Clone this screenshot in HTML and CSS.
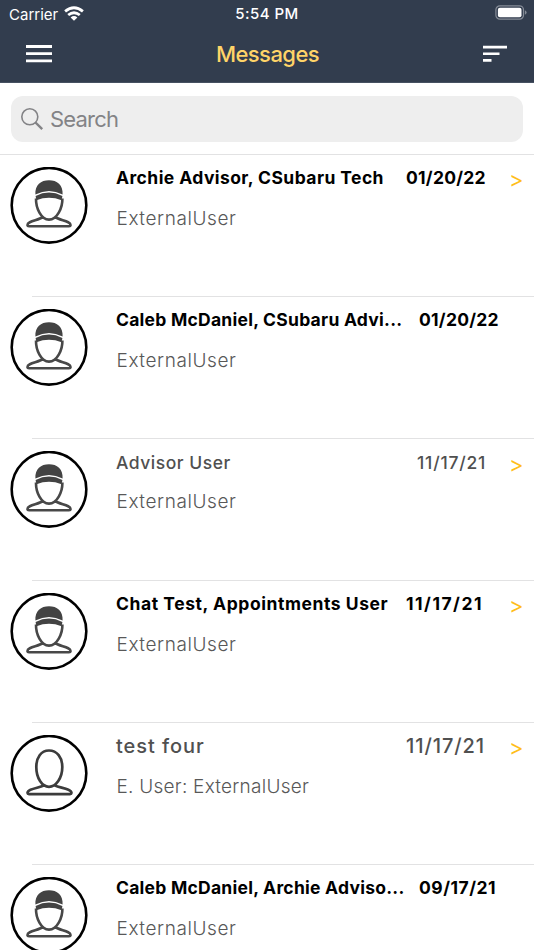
FILE: index.html
```html
<!DOCTYPE html>
<html lang="en">
<head>
<meta charset="utf-8">
<title>Messages</title>
<link rel="stylesheet" href="styles.css">
</head>
<body>
<svg class="defs" aria-hidden="true">
  <symbol id="cap-user" viewBox="0 0 78 78">
    <circle cx="39" cy="38.3" r="37.3" fill="#fff" stroke="#000" stroke-width="2.6"/>
    <path d="M26 31.5C25.8 41 31 52.6 39 52.6S52.6 41 52.4 31.5M32.5 50C29 53.6 17.5 53.4 17.4 58.2Q17.5 59.2 19 59.2H59Q60.5 59.2 60.6 58.2C60.5 53.4 49 53.6 45.5 50" fill="none" stroke="#484848" stroke-width="2.6"/>
    <path d="M25.4 27.6C24.8 17.5 31 13.2 39 13.2S53.2 17.5 52.6 27.6Q39 20.5 25.4 27.6Z" fill="#434343"/>
    <path d="M25.6 28.9Q39 22.3 52.4 28.9L51.6 33.2Q39 28.4 26.4 33.2Z" fill="#434343"/>
  </symbol>
  <symbol id="plain-user" viewBox="0 0 78 78">
    <circle cx="39" cy="38.3" r="37.3" fill="#fff" stroke="#000" stroke-width="2.6"/>
    <path d="M39 15.5C31 15.5 26.3 22.5 26.3 32C26.3 43 32 51.8 39 51.8S52.3 43 52.3 32C52.3 22.5 47 15.5 39 15.5ZM33.5 50.6C29 53 17.5 53.6 17.5 58Q17.6 59.2 19 59.2H60Q61.4 59.2 61.5 58C61.5 53.6 50 53 45 50.6" fill="none" stroke="#3c3c3c" stroke-width="2.7"/>
  </symbol>
</svg>
<header class="header">
  <div class="status">
    <div class="carrier">Carrier
      <svg class="wifi" width="20" height="15" viewBox="0 0 20 15" fill="none" stroke="#fff" stroke-width="2.8"><path d="M1.1 5.4Q10-1.8 18.9 5.4M4.2 9Q10 4.4 15.8 9"/><path d="M6.6 11.4Q10 8.6 13.4 11.4L10 14.8Z" fill="#fff" stroke="none"/></svg>
    </div>
    <div class="clock">5:54 PM</div>
    <svg class="battery" width="32" height="16" viewBox="0 0 32 16"><rect x=".9" y=".8" width="27.6" height="13.4" rx="4" fill="none" stroke="#858c97" stroke-width="1.2"/><rect x="2.9" y="2.8" width="23.6" height="9.4" rx="2" fill="#fff"/><path d="M29.9 5.2Q31.6 6 31.6 7.5T29.9 9.8Z" fill="#858c97"/></svg>
  </div>
  <div class="nav">
    <svg width="26" height="18" viewBox="0 0 26 18" fill="#fff"><path d="M0 0h26v2.9H0zM0 7.2h26v2.9H0zM0 14.4h26v2.9H0z"/></svg>
    <h1 class="heading">Messages</h1>
    <svg width="24" height="18" viewBox="0 0 24 18" fill="#fff"><path d="M0 .8h24v2.7H0zM0 7.4h16.5v2.7H0zM0 14.1h8.5v2.7H0z"/></svg>
  </div>
</header>
<div class="searchbar">
  <div class="field">
    <svg width="23" height="23" viewBox="0 0 23 23" fill="none" stroke="#838386"><circle cx="8.8" cy="8.8" r="8" stroke-width="1.6"/><path d="M14.5 14.5L21.2 21.2" stroke-width="2.4"/></svg>
    <span class="placeholder">Search</span>
  </div>
</div>
<main class="list">
  <article class="row unread">
    <svg class="avatar"><use href="#cap-user"/></svg>
    <div class="body"><div class="top"><span class="name n1">Archie Advisor, CSubaru Tech</span><span class="date">01/20/22</span><span class="chevron">&gt;</span></div><p class="preview">ExternalUser</p></div>
  </article>
  <article class="row unread wide">
    <svg class="avatar"><use href="#cap-user"/></svg>
    <div class="body"><div class="top"><span class="name n2">Caleb McDaniel, CSubaru Advi...</span><span class="date">01/20/22</span></div><p class="preview">ExternalUser</p></div>
  </article>
  <article class="row read">
    <svg class="avatar"><use href="#cap-user"/></svg>
    <div class="body"><div class="top"><span class="name n3">Advisor User</span><span class="date d3">11/17/21</span><span class="chevron">&gt;</span></div><p class="preview">ExternalUser</p></div>
  </article>
  <article class="row unread">
    <svg class="avatar"><use href="#cap-user"/></svg>
    <div class="body"><div class="top"><span class="name n4">Chat Test, Appointments User</span><span class="date d4">11/17/21</span><span class="chevron">&gt;</span></div><p class="preview">ExternalUser</p></div>
  </article>
  <article class="row read large">
    <svg class="avatar"><use href="#plain-user"/></svg>
    <div class="body"><div class="top"><span class="name n5">test four</span><span class="date d5">11/17/21</span><span class="chevron">&gt;</span></div><p class="preview p5">E. User: ExternalUser</p></div>
  </article>
  <article class="row unread wide">
    <svg class="avatar"><use href="#cap-user"/></svg>
    <div class="body"><div class="top"><span class="name n6">Caleb McDaniel, Archie Adviso...</span><span class="date d6">09/17/21</span></div><p class="preview">ExternalUser</p></div>
  </article>
</main>
</body>
</html>
```
FILE: styles.css
```css
* { box-sizing: border-box; }
body { margin: 0; height: 950px; overflow: hidden; display: flex; flex-direction: column; background: #fff; font-family: Inter, Roboto, sans-serif; }
svg { display: block; flex: none; }
.defs { position: absolute; width: 0; height: 0; }
.header { flex: none; height: 83px; background: #323d4e; color: #fff; border-bottom: 1px solid #465161; }
.status { height: 28px; padding: 0 7px 0 9px; display: grid; grid-template-columns: 1fr auto 1fr; align-items: center; font-size: 15px; }
.carrier { display: flex; align-items: center; gap: 6px; }
.wifi { margin-top: -2px; }
.clock { margin: -1px 0 0 -2px; font-weight: 500; letter-spacing: .45px; }
.battery { justify-self: end; margin-top: -2px; }
.nav { height: 52px; padding: 0 27px 0 26px; display: flex; align-items: center; justify-content: space-between; }
.heading { margin: 0; font-size: 22px; font-weight: 500; letter-spacing: -.55px; color: #ffd468; }
.searchbar { flex: none; height: 72px; padding: 13px 11px 0; border-bottom: 1px solid #e2e2e3; }
.field { height: 46px; padding-left: 10px; border-radius: 12px; background: #eee; display: flex; align-items: center; gap: 6px; color: #838386; font-size: 22px; letter-spacing: -.8px; }
.list { flex: 1; min-height: 0; overflow: hidden; }
.row { height: 142px; padding: 12px 0 0 10px; display: flex; background: linear-gradient(#e2e2e3, #e2e2e3) 32px 141px / 100% 1px no-repeat; }
.row:last-child { height: 86px; overflow: hidden; background: none; }
.avatar { width: 78px; height: 78px; }
.body { flex: 1; margin-left: 28px; }
.top { height: 24px; line-height: 24px; display: flex; white-space: nowrap; font-size: 17.5px; margin-top: -1px; letter-spacing: .25px; }
.name { flex: 1; }
.n1 { letter-spacing: .42px; }
.n3 { letter-spacing: .52px; }
.n4 { letter-spacing: .56px; }
.n5 { letter-spacing: .95px; }
.date { width: 80px; }
.d3 { width: 69px; letter-spacing: .8px; }
.d4 { letter-spacing: 1.5px; }
.d5 { letter-spacing: .9px; }
.d6 { letter-spacing: .5px; }
.top .chevron { width: 25px; margin: 1px 0 0 23px; color: #ffbe1a; font-size: 22px; line-height: 24px; font-weight: 400; letter-spacing: 0; }
.unread .top { font-weight: 700; color: #000; }
.read .top { font-weight: 500; color: #505050; margin-top: 0; }
.wide .date { width: 115px; }
.large .top { font-size: 20px; margin-top: -1px; }
.preview { margin: 17px 0 0 .5px; font-size: 19px; line-height: 24px; font-weight: 300; color: #585858; letter-spacing: .58px; }
.read .preview { margin-top: 15px; }
.large .preview { margin-top: 17px; letter-spacing: .25px; }
```
